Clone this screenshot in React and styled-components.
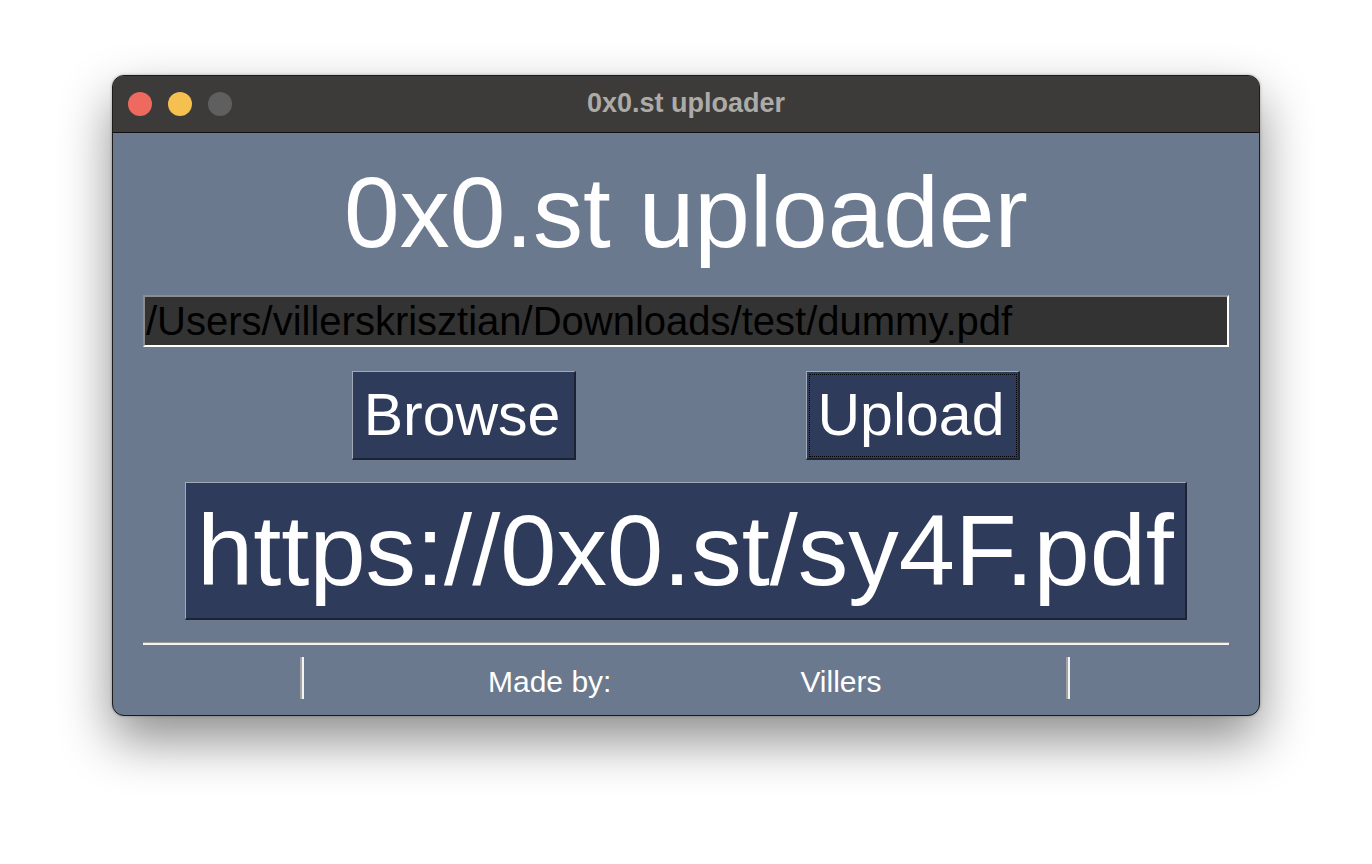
import React from 'react';
import styled, { createGlobalStyle } from 'styled-components';

const GlobalStyle = createGlobalStyle`
  html, body {
    margin: 0;
    padding: 0;
    background: #ffffff;
  }

  body {
    font-family: 'Liberation Sans', Arial, sans-serif;
  }
`;

const Page = styled.div`
  width: 1372px;
  height: 864px;
  padding: 75px 0 0 112px;
  box-sizing: border-box;
  overflow: hidden;
`;

const Window = styled.div`
  width: 1148px;
  height: 641px;
  box-sizing: border-box;
  border: 1px solid #1b1b1b;
  border-radius: 12px;
  overflow: hidden;
  display: flex;
  flex-direction: column;
  background: #6b798e;
  box-shadow: 0 24px 52px rgba(0, 0, 0, 0.45), 0 0 3px rgba(0, 0, 0, 0.3);
`;

const TitleBar = styled.div`
  height: 56px;
  flex: none;
  display: grid;
  grid-template-columns: 1fr auto 1fr;
  align-items: center;
  padding: 0 15px;
  background: #3d3b39;
  border-bottom: 1px solid #111111;
`;

const Lights = styled.div`
  display: flex;
  gap: 16px;
`;

const Light = styled.span`
  width: 24px;
  height: 24px;
  border-radius: 50%;
  background: ${(props) => props.color};
`;

const WindowTitle = styled.div`
  font-size: 27px;
  font-weight: 700;
  color: #adaba8;
  transform: translateY(-1px);
`;

const Body = styled.div`
  flex: 1;
  display: flex;
  flex-direction: column;
  align-items: stretch;
  padding: 29px 30px 0 30px;
`;

const Heading = styled.h1`
  margin: 0;
  font-size: 100px;
  font-weight: 400;
  line-height: 100px;
  color: #ffffff;
  text-align: center;
`;

const PathField = styled.div`
  margin-top: 33px;
  height: 48px;
  line-height: 48px;
  border-style: solid;
  border-width: 2px;
  border-color: #8d8d8d #ffffff #ffffff #8d8d8d;
  background: #333333;
  color: #000000;
  font-size: 40px;
  padding-left: 1px;
  white-space: nowrap;
  overflow: hidden;
`;

const ButtonRow = styled.div`
  margin-top: 24px;
  display: flex;
  justify-content: center;
  gap: 230px;
`;

const Button = styled.button`
  height: 89px;
  width: ${(props) => props.width}px;
  box-sizing: border-box;
  padding: 0 3px 0 0;
  margin: 0;
  font-family: 'Liberation Sans', Arial, sans-serif;
  font-size: 59px;
  line-height: 1;
  color: #ffffff;
  background: #2e3b5b;
  border-style: solid;
  border-width: 1px 2px 2px 1px;
  border-color: #a2a9b6 #1d2334 #1d2334 #a2a9b6;
  outline: ${(props) => (props.focused ? '1px dotted #000000' : 'none')};
  outline-offset: -4px;
`;

const ResultLabel = styled.div`
  margin: 22px auto 0 auto;
  width: 1002px;
  height: 138px;
  box-sizing: border-box;
  display: flex;
  align-items: center;
  justify-content: center;
  background: #2e3b5b;
  border-style: solid;
  border-width: 1px 2px 2px 1px;
  border-color: #a2a9b6 #1d2334 #1d2334 #a2a9b6;
  color: #ffffff;
  font-size: 101px;
  white-space: nowrap;
`;

const Separator = styled.div`
  margin-top: 22px;
  height: 2px;
  border-top: 1px solid #9b9b9b;
  background: #f2f2f2;
`;

const Footer = styled.div`
  margin-top: 12px;
  height: 42px;
  display: grid;
  grid-template-columns: 157px 4px 1fr 4px 159px;
  align-items: center;
`;

const VSep = styled.div`
  height: 42px;
  border-left: 2px solid #a3a3a3;
  border-right: 2px solid #f4f4f4;
  box-sizing: border-box;
`;

const Credits = styled.div`
  display: flex;
  padding-left: 184px;
  gap: 189px;
  font-size: 30px;
  color: #ffffff;
  line-height: 1;
  transform: translateY(4px);
`;

export default function App() {
  return (
    <Page>
      <GlobalStyle />
      <Window>
        <TitleBar>
          <Lights>
            <Light color="#ee6a5f" />
            <Light color="#f5c04f" />
            <Light color="#5f5f5f" />
          </Lights>
          <WindowTitle>0x0.st uploader</WindowTitle>
          <div />
        </TitleBar>
        <Body>
          <Heading>0x0.st uploader</Heading>
          <PathField>/Users/villerskrisztian/Downloads/test/dummy.pdf</PathField>
          <ButtonRow>
            <Button width={224}>Browse</Button>
            <Button width={214} focused>
              Upload
            </Button>
          </ButtonRow>
          <ResultLabel>https://0x0.st/sy4F.pdf</ResultLabel>
          <Separator />
          <Footer>
            <div />
            <VSep />
            <Credits>
              <span>Made by:</span>
              <span>Villers</span>
            </Credits>
            <VSep />
            <div />
          </Footer>
        </Body>
      </Window>
    </Page>
  );
}
